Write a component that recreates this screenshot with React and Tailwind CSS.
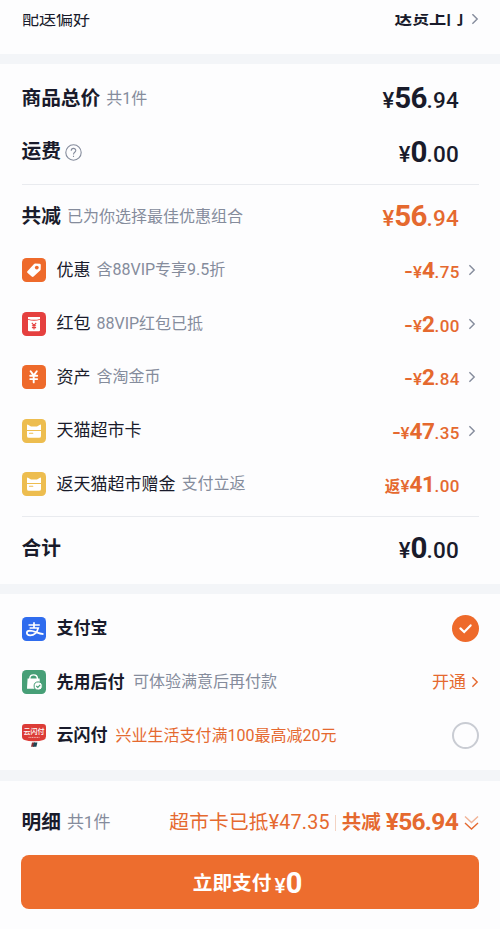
import clsx from 'clsx';

const TagIcon = () => (
  <svg width="24" height="24" viewBox="0 0 24 24" className="shrink-0">
    <rect width="24" height="24" rx="4.5" fill="#ee6a2b" />
    <path d="M5.4 13.2 11.8 6.2Q12.4 5.6 13.2 5.6L17.6 5.7Q18.8 5.8 18.8 7L18.7 11.2Q18.7 12 18.1 12.6L11.6 18.6Q10.6 19.4 9.7 18.5L5.4 14.8Q4.7 14 5.4 13.2Z" fill="#fff" />
    <circle cx="14.8" cy="9.6" r="1.9" fill="#ee6a2b" />
  </svg>
);

const PacketIcon = () => (
  <svg width="24" height="24" viewBox="0 0 24 24" className="shrink-0">
    <rect width="24" height="24" rx="4.5" fill="#e5403f" />
    <path d="M6 5H18V6.9Q12 8.7 6 6.9Z" fill="#fff" />
    <path d="M6 7.7Q12 9.6 18 7.7V18.2Q18 19.3 16.9 19.3H7.1Q6 19.3 6 18.2Z" fill="#fff" />
    <path d="M9.8 10.8 12 13.4 14.2 10.8M12 13.4V17.6M9.9 13.7H14.1M9.9 15.6H14.1" stroke="#e5403f" strokeWidth="1.1" fill="none" />
  </svg>
);

const YuanIcon = () => (
  <svg width="24" height="24" viewBox="0 0 24 24" className="shrink-0">
    <rect width="24" height="24" rx="4.5" fill="#ee6a2b" />
    <path d="M8.6 6.2 11.7 10.4 14.8 6.2M11.7 10.4V17.4M8.2 10.8H15.2M8.2 14.1H15.2" stroke="#fff" strokeWidth="1.9" strokeLinecap="round" fill="none" />
  </svg>
);

const CardIcon = () => (
  <svg width="24" height="24" viewBox="0 0 24 24" className="shrink-0">
    <rect width="24" height="24" rx="4.5" fill="#edbd4f" />
    <path d="M5 10.9V6.4Q5 5.2 6 5.7L9 7.5H15L18 5.7Q19 5.2 19 6.4V10.9Z" fill="#fff" />
    <path d="M5 12H19V16.9Q19 18.8 17.1 18.8H6.9Q5 18.8 5 16.9Z" fill="#fff" />
    <path d="M7.5 14.3H10.8" stroke="#edbd4f" strokeWidth="1.1" strokeLinecap="round" />
  </svg>
);

const AlipayIcon = () => (
  <svg width="24" height="24" viewBox="0 0 24 24" className="shrink-0">
    <rect width="24" height="24" rx="4.5" fill="#2f6cee" />
    <path d="M6.5 8H17.8M12 5.2V11M7.6 11H16.3Q14.3 18.2 8.2 18.3C3.7 18.2 3.8 13.7 8 13.6C12 13.6 15.5 16.5 21.5 17.2" stroke="#fff" strokeWidth="1.7" fill="none" />
  </svg>
);

const BagIcon = () => (
  <svg width="24" height="24" viewBox="0 0 24 24" className="shrink-0">
    <rect width="24" height="24" rx="4.5" fill="#479f77" />
    <path d="M7.8 9.5V8.6C7.8 3.6 15.4 3.6 15.4 8.6V9.5" stroke="#fff" strokeWidth="1.4" fill="none" />
    <path d="M5.6 8.6H17.6L18.3 18.8H5Z" fill="#fff" />
    <circle cx="16.2" cy="16" r="4.1" fill="#fff" stroke="#479f77" strokeWidth="1" />
    <path d="M14.3 16 15.8 17.4 18.2 14.8" stroke="#479f77" strokeWidth="1.2" fill="none" />
  </svg>
);

const UnionIcon = () => (
  <svg width="24" height="24" viewBox="0 0 24 24" className="shrink-0">
    <path d="M3 0H21Q24 0 24 3V12.6Q24 15.4 21.4 15.9Q18 17.2 12 17.2T2.6 15.9Q0 15.4 0 12.6V3Q0 0 3 0Z" fill="#dc3c37" />
    <text x="12" y="10.2" textAnchor="middle" fontSize="7" fontWeight="500" fill="#fff">云闪付</text>
    <path d="M6.5 13.4H17.5" stroke="#f3b5b2" strokeWidth="1" strokeDasharray="1.2 .5" />
    <path d="M10 18.4H13L12 22.8H9Z" fill="#8a3034" />
    <path d="M12 18.4H15.4L14.4 22.8H11Z" fill="#1d4654" />
  </svg>
);

const Chevron = ({ className }) => (
  <svg width="8" height="12" viewBox="0 0 8 12" className={clsx('shrink-0', className)}>
    <path d="M1.4 1.2 6.2 6 1.4 10.8" stroke="currentColor" strokeWidth="1.4" fill="none" />
  </svg>
);

const TotalPrice = ({ value, orange }) => {
  const [whole, cents] = value.split('.');
  return (
    <div className={clsx('mr-[20px] flex items-baseline leading-none', orange ? 'text-[#e5692f]' : 'text-[#191b2b]')}>
      <span className="text-[22px] font-medium">¥</span>
      <span className="text-[29.5px] font-bold tracking-[-0.8px]">{whole}</span>
      <span className="text-[22.5px] font-medium tracking-[0.2px]">.{cents}</span>
    </div>
  );
};

const ItemPrice = ({ sign, value }) => {
  const [whole, cents] = value.split('.');
  return (
    <div className="flex items-baseline leading-none text-[#e5692f]">
      {sign === '-' ? (
        <span className="inline-block origin-right scale-x-125 text-[20px] font-medium">-</span>
      ) : (
        <span className="text-[15.5px] font-bold">{sign}</span>
      )}
      <span className="text-[17px] font-medium">¥</span>
      <span className="text-[22.5px] font-bold tracking-[-0.4px]">{whole}</span>
      <span className="text-[17px] font-medium tracking-[0.5px]">.{cents}</span>
    </div>
  );
};

const discounts = [
  { icon: TagIcon, title: '优惠', note: '含88VIP专享9.5折', sign: '-', value: '4.75', link: true },
  { icon: PacketIcon, title: '红包', note: '88VIP红包已抵', sign: '-', value: '2.00', link: true },
  { icon: YuanIcon, title: '资产', note: '含淘金币', sign: '-', value: '2.84', link: true },
  { icon: CardIcon, title: '天猫超市卡', sign: '-', value: '47.35', link: true },
  { icon: CardIcon, title: '返天猫超市赠金', note: '支付立返', sign: '返', value: '41.00' },
];

const Row = ({ children }) => <div className="flex h-[53.5px] items-center justify-between">{children}</div>;

const Band = () => <div className="h-[10.5px] bg-[#f3f5f8]" />;

const App = () => (
  <div className="h-[929px] w-[500px] overflow-hidden bg-[#fdfdfe] pt-[14px] text-[#191b2b] [font-family:Roboto,'Noto_Sans_CJK_SC',sans-serif]">
    <div className="h-[39.5px] overflow-hidden pr-[21px] pl-[22px]">
      <div className="-mt-[21.5px]">
        <Row>
          <span className="text-[17px]">配送偏好</span>
          <div className="flex items-center gap-[7.5px]">
            <span className="text-[17.2px] font-bold">送货上门</span>
            <Chevron className="text-[#858c9c]" />
          </div>
        </Row>
      </div>
    </div>
    <Band />

    <div className="h-[519.5px] pr-[21px] pl-[21.5px] pt-[8px]">
      <Row>
        <div className="flex items-center gap-[6px]">
          <span className="text-[19.7px] font-bold">商品总价</span>
          <span className="text-[16px] text-[#858c9c]">共1件</span>
        </div>
        <TotalPrice value="56.94" />
      </Row>
      <Row>
        <div className="flex items-center gap-[4px]">
          <span className="text-[19.7px] font-bold">运费</span>
          <svg width="17" height="17" viewBox="0 0 17 17" className="text-[#858c9c]">
            <circle cx="8.5" cy="8.5" r="7.7" stroke="currentColor" strokeWidth="1.1" fill="none" />
            <path d="M6.2 6.8C6.2 3.6 10.8 3.7 10.8 6.6C10.8 8.3 8.5 8.3 8.5 10.4M8.5 11.7V13" stroke="currentColor" strokeWidth="1.1" fill="none" />
          </svg>
        </div>
        <TotalPrice value="0.00" />
      </Row>
      <div className="mt-[5px] mb-[5px] h-px bg-[#e9ebef]" />
      <Row>
        <div className="flex items-center gap-[6px]">
          <span className="text-[19.7px] font-bold">共减</span>
          <span className="text-[16px] text-[#858c9c]">已为你选择最佳优惠组合</span>
        </div>
        <TotalPrice value="56.94" orange />
      </Row>
      {discounts.map(({ icon: Icon, title, note, sign, value, link }) => (
        <Row key={title}>
          <div className="flex items-center">
            <Icon />
            <span className="ml-[11px] text-[17px]">{title}</span>
            {note && <span className="ml-[6px] text-[16px] text-[#858c9c]">{note}</span>}
          </div>
          <div className="flex items-center">
            <ItemPrice sign={sign} value={value} />
            <div className="flex w-[19px] pl-[8px]">{link && <Chevron className="text-[#858c9c]" />}</div>
          </div>
        </Row>
      ))}
      <div className="mt-[5px] mb-[5px] h-px bg-[#e9ebef]" />
      <Row>
        <span className="text-[19.7px] font-bold">合计</span>
        <TotalPrice value="0.00" />
      </Row>
    </div>
    <Band />

    <div className="h-[176px] pr-[21px] pl-[21.5px] pt-[8px]">
      <Row>
        <div className="flex items-center gap-[11px]">
          <AlipayIcon />
          <span className="text-[17px] font-bold">支付宝</span>
        </div>
        <svg width="27" height="27" viewBox="0 0 27 27">
          <circle cx="13.5" cy="13.5" r="13.5" fill="#ee6a2b" />
          <path d="M8.4 13.4 12.2 17 18.6 10.4" stroke="#fff" strokeWidth="2.2" strokeLinecap="round" fill="none" />
        </svg>
      </Row>
      <Row>
        <div className="flex items-center">
          <BagIcon />
          <span className="ml-[11px] text-[17px] font-bold">先用后付</span>
          <span className="ml-[8.5px] text-[16px] text-[#858c9c]">可体验满意后再付款</span>
        </div>
        <div className="flex items-center gap-[5px] text-[#e5692f]">
          <span className="text-[17px]">开通</span>
          <Chevron />
        </div>
      </Row>
      <Row>
        <div className="flex items-center">
          <UnionIcon />
          <span className="ml-[11px] text-[17px] font-bold">云闪付</span>
          <span className="ml-[8px] text-[16px] text-[#e5692f]">兴业生活支付满100最高减20元</span>
        </div>
        <div className="size-[27px] rounded-full border-2 border-[#c9ccd3]" />
      </Row>
    </div>
    <Band />

    <div className="pr-[21px] pl-[21.5px] pt-[15.5px]">
      <Row>
        <div className="flex items-center gap-[6px]">
          <span className="text-[19.7px] font-bold">明细</span>
          <span className="text-[17px] text-[#858c9c]">共1件</span>
        </div>
        <div className="flex items-center text-[#e5692f]">
          <span className="text-[19.7px] tracking-[0.2px]">超市卡已抵¥47.35</span>
          <div className="mx-[5.5px] h-[16px] w-px bg-[#f3d3c3]" />
          <span className="text-[19.5px] font-bold">共减</span>
          <span className="ml-[5px] text-[24.5px] leading-none font-bold tracking-[-0.7px]">¥56.94</span>
          <svg width="15" height="16" viewBox="0 0 15 16" className="ml-[6px]" fill="none" stroke="currentColor" strokeWidth="1.4">
            <path d="M1 1.5 7.5 7.5 14 1.5" opacity=".5" />
            <path d="M1 8 7.5 14 14 8" />
          </svg>
        </div>
      </Row>
      <button className="mt-[5px] -ml-[0.5px] flex h-[54px] w-[458px] items-center justify-center rounded-lg bg-[#ed6d2e] pt-[4px] pr-[5px] text-white">
        <span className="text-[19.7px] font-bold">立即支付</span>
        <span className="ml-[3px] flex items-baseline leading-none">
          <span className="text-[21px] font-medium">¥</span>
          <span className="text-[29px] font-bold">0</span>
        </span>
      </button>
    </div>
  </div>
);

export default App;
